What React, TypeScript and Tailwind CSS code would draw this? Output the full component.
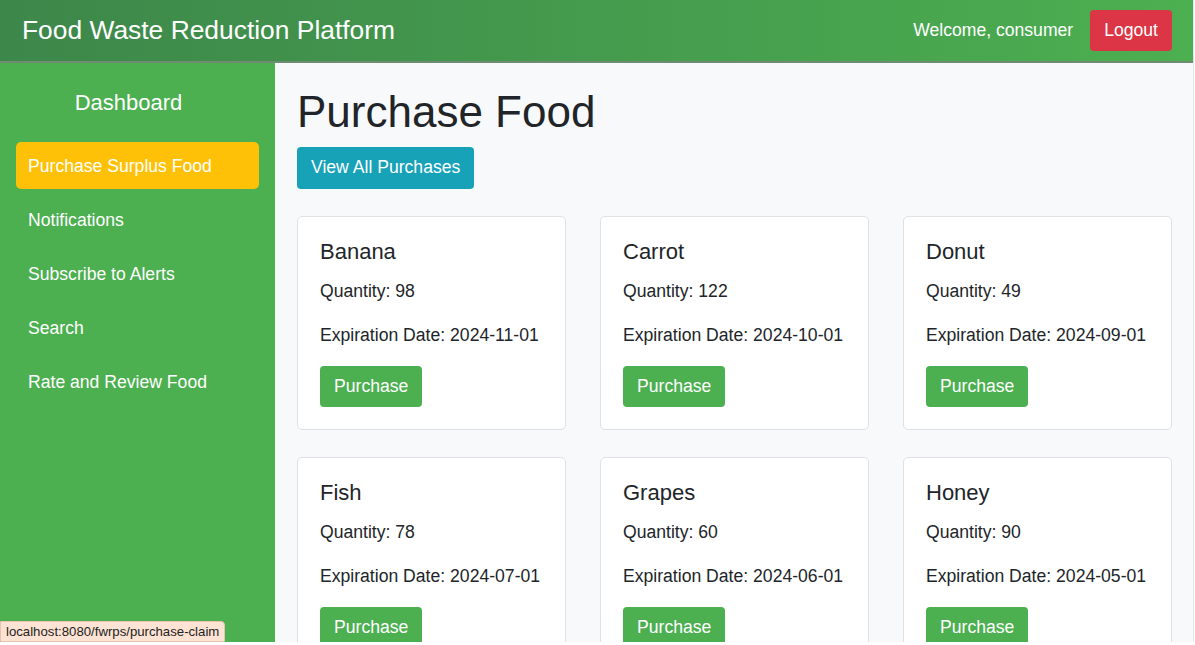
const foods = [
  { name: 'Banana', quantity: 98, expiration: '2024-11-01' },
  { name: 'Carrot', quantity: 122, expiration: '2024-10-01' },
  { name: 'Donut', quantity: 49, expiration: '2024-09-01' },
  { name: 'Fish', quantity: 78, expiration: '2024-07-01' },
  { name: 'Grapes', quantity: 60, expiration: '2024-06-01' },
  { name: 'Honey', quantity: 90, expiration: '2024-05-01' },
];

const navItems = [
  'Purchase Surplus Food',
  'Notifications',
  'Subscribe to Alerts',
  'Search',
  'Rate and Review Food',
];

function FoodCard({ food }: { food: (typeof foods)[number] }) {
  return (
    <div className="rounded-[5px] border border-[#dfe1e4] bg-white p-[22px]">
      <h5 className="mb-[13px] text-[22px] leading-[26px] text-[#212529]">{food.name}</h5>
      <p className="mb-[17.6px] text-[17.6px] leading-[26.4px] text-[#212529]">
        Quantity: {food.quantity}
      </p>
      <p className="mb-[17.6px] text-[17.6px] leading-[26.4px] text-[#212529]">
        Expiration Date: {food.expiration}
      </p>
      <button className="h-[41px] rounded-[4px] bg-[#4caf50] px-[14px] text-[17.6px] leading-[26.4px] text-white">
        Purchase
      </button>
    </div>
  );
}

export default function App() {
  return (
    <div
      className="relative h-[645px] w-[1195px] overflow-hidden bg-white"
      style={{ fontFamily: '"Liberation Sans", Arial, sans-serif' }}
    >
      <div className="flex h-[642px] w-[1194px] flex-col overflow-hidden border-r border-[#e4e6e9] bg-[#f8f9fa]">
        <header className="flex h-[63px] shrink-0 items-center justify-between border-b-2 border-[#6f8c72] bg-gradient-to-r from-[#3d874a] to-[#4caf50] pb-[1px] pl-[22px] pr-[21px]">
          <h1 className="text-[26.4px] leading-[32px] text-white">Food Waste Reduction Platform</h1>
          <div className="flex items-center gap-[17px]">
            <span className="text-[17.6px] leading-[26.4px] text-white">Welcome, consumer</span>
            <button className="h-[41px] rounded-[4px] bg-[#dc3545] px-[14px] text-[17.6px] leading-[26.4px] text-white">
              Logout
            </button>
          </div>
        </header>

        <div className="flex min-h-0 flex-1">
          <aside className="w-[275px] shrink-0 bg-[#4caf50] px-4 pt-[27px]">
            <h4 className="mb-[26px] pr-[18px] text-center text-[22px] leading-[26.4px] text-white">
              Dashboard
            </h4>
            <nav className="flex flex-col gap-[7px]">
              {navItems.map((item, i) => (
                <a
                  key={item}
                  href="#"
                  className={`flex h-[47px] items-center rounded-[5px] px-3 text-[17.6px] leading-[26.4px] text-white ${
                    i === 0 ? 'bg-[#ffc107]' : ''
                  }`}
                >
                  {item}
                </a>
              ))}
            </nav>
          </aside>

          <main className="flex-1 pl-[22px] pr-[21px] pt-[23px]">
            <h1 className="mb-[7.8px] text-[44px] leading-[52.8px] text-[#212529]">Purchase Food</h1>
            <button className="mb-[27px] h-[42px] rounded-[4px] bg-[#17a2b8] px-[14px] text-[17.6px] leading-[26.4px] text-white">
              View All Purchases
            </button>
            <div className="grid grid-cols-3 gap-x-[34px] gap-y-[27px]">
              {foods.map((food) => (
                <FoodCard key={food.name} food={food} />
              ))}
            </div>
          </main>
        </div>
      </div>

      <div className="absolute bottom-[3px] left-0 rounded-tr-[4px] border border-[#e9c3b0] bg-[#fde3d4] px-[5px] text-[13.2px] leading-[19px] text-[#222]">
        localhost:8080/fwrps/purchase-claim
      </div>
    </div>
  );
}
